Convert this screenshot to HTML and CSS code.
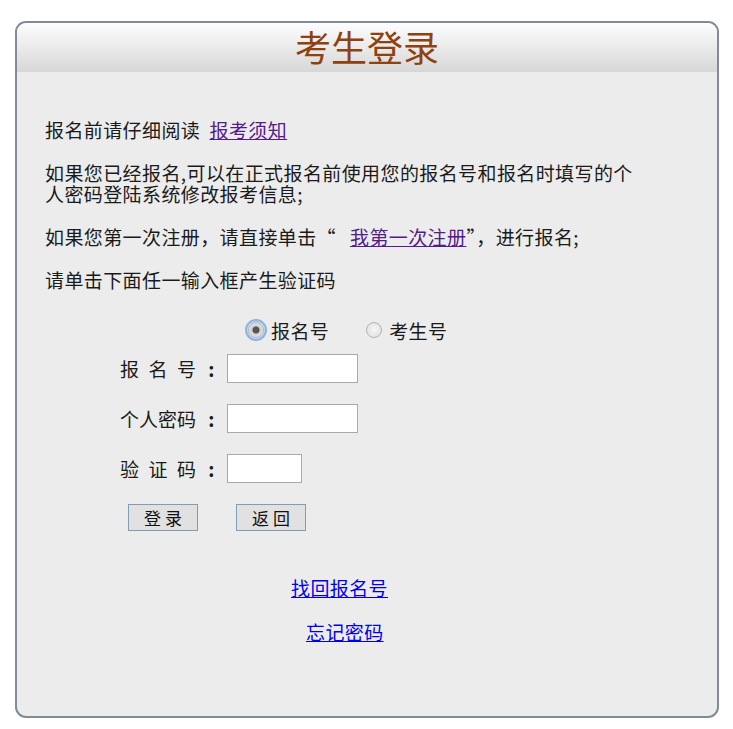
FILE: index.html
```html
<!DOCTYPE html>
<html lang="zh-CN">
<head>
    <meta charset="UTF-8">
    <title>考生登录</title>
    <link rel="stylesheet" href="styles.css">
</head>
<body>
    <div class="panel">
        <div class="panel-head">考生登录</div>
        <div class="panel-body">
            <p>报名前请仔细阅读&nbsp;&nbsp;<a href="#" class="visited">报考须知</a></p>
            <p>如果您已经报名,可以在正式报名前使用您的报名号和报名时填写的个<br>人密码登陆系统修改报考信息;</p>
            <p>如果您第一次注册，请直接单击“&nbsp;&nbsp;&nbsp;<a href="#" class="visited">我第一次注册</a>”，进行报名;</p>
            <p>请单击下面任一输入框产生验证码</p>

            <div class="radio-row">
                <label class="radio"><input type="radio" name="type" class="focused" checked>报名号</label>
                <label class="radio"><input type="radio" name="type">考生号</label>
            </div>

            <form class="login-form">
                <div class="form-row">
                    <span class="lbl">报名号</span><span class="colon">:</span>
                    <input type="text" class="field">
                </div>
                <div class="form-row">
                    <span class="lbl">个人密码</span><span class="colon">:</span>
                    <input type="password" class="field">
                </div>
                <div class="form-row">
                    <span class="lbl">验证码</span><span class="colon">:</span>
                    <input type="text" class="field short">
                </div>
                <div class="btn-row">
                    <button type="button">登 录</button>
                    <button type="button">返 回</button>
                </div>
            </form>

            <div class="links">
                <a href="#" class="find">找回报名号</a>
                <a href="#" class="forget">忘记密码</a>
            </div>
        </div>
    </div>
</body>
</html>
```

FILE: styles.css
```css
body {
    margin: 0;
    background: #fff;
    font-family: "Noto Sans CJK SC", "Liberation Sans", sans-serif;
    color: #1a1a1a;
}
.panel {
    margin: 21px 14px 0 15px;
    border: 2px solid #7f8c98;
    border-radius: 11px;
    background: #ececec;
    overflow: hidden;
}
.panel-head {
    height: 49px;
    line-height: 46px;
    text-align: center;
    font-size: 36px;
    color: #8e420f;
    background: linear-gradient(#fdfdfd, #d7d7d7);
}
.panel-body {
    padding: 47px 28px 73px 28px;
    font-size: 19px;
    letter-spacing: 0.4px;
}
p {
    margin: 0 0 22px;
    line-height: 21px;
}
a {
    color: #0000ee;
}
a.visited {
    color: #551a8b;
}
.radio-row {
    display: flex;
    align-items: center;
    height: 20px;
    margin: 30px 0 14px 203px;
    gap: 37px;
}
.radio {
    display: flex;
    align-items: center;
}
.radio input {
    appearance: none;
    width: 16px;
    height: 16px;
    margin: 0 7px 0 0;
    border: 1px solid #b4b4b4;
    border-radius: 50%;
    background: radial-gradient(#f7f7f7, #dcdcdc);
}
.radio input:checked {
    background: radial-gradient(circle, #555 0 3px, #cfcfcf 4px, #e8e8e8 8px);
}
.radio input.focused {
    outline: 2px solid #8fb2e8;
    outline-offset: 1px;
    box-shadow: 0 0 0 2px #c6d8f3;
}
.login-form {
    margin-left: 75px;
}
.form-row {
    display: flex;
    align-items: center;
    height: 28px;
    margin-top: 1px;
    margin-bottom: 22px;
}
.lbl {
    display: inline-block;
    width: 76px;
    white-space: nowrap;
    letter-spacing: 0;
    text-align: justify;
    text-align-last: justify;
}
.colon {
    width: 31px;
    text-align: center;
    font-weight: bold;
}
.field {
    box-sizing: border-box;
    width: 131px;
    height: 29px;
    border: 1px solid #a9a9a9;
    background: #fff;
    margin: 0;
}
.field.short {
    width: 75px;
}
.btn-row {
    display: flex;
    gap: 38px;
    margin: 1px 0 0 8px;
}
.btn-row button {
    width: 70px;
    height: 27px;
    padding: 0;
    border: 1px solid #7f9db9;
    background: #e1e1e1;
    font-family: "Noto Sans CJK SC", sans-serif;
    font-size: 17px;
    line-height: 25px;
    color: #111;
}
.links {
    display: flex;
    flex-direction: column;
    align-items: flex-start;
    margin-top: 46px;
    gap: 22px;
}
.links a {
    line-height: 22px;
}
.links .find {
    margin-left: 246px;
}
.links .forget {
    margin-left: 261px;
}
```
